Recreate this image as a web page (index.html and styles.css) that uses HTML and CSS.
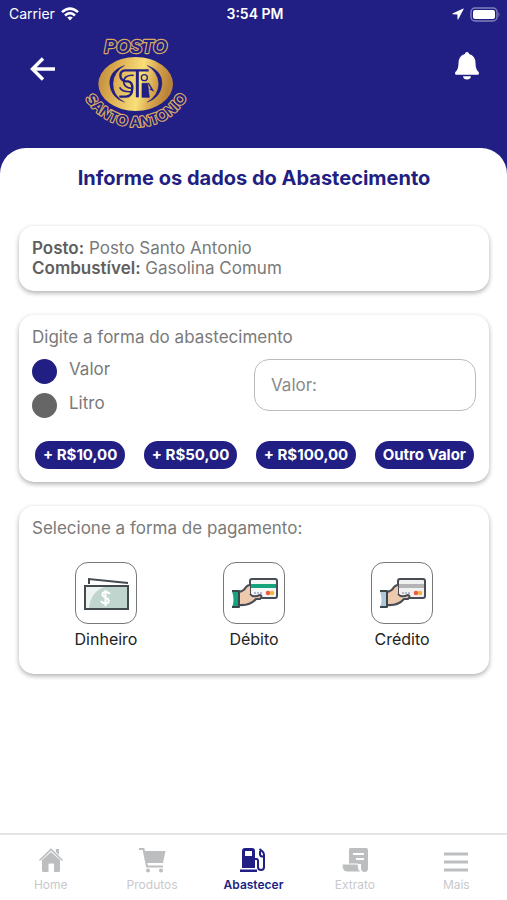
FILE: index.html
```html
<!DOCTYPE html>
<html lang="pt-BR">
  <head>
    <meta charset="UTF-8" />
    <meta name="viewport" content="width=device-width, initial-scale=1" />
    <title>Abastecer</title>
    <link rel="stylesheet" href="styles.css">
  </head>
  <body>
    <header class="header">
      <div class="status-bar">
        <div class="carrier">
          <span>Carrier</span>
          <svg width="18" height="14" viewBox="0 0 18 14" fill="none" stroke="#fff" stroke-width="2.6">
            <path d="M1 5.1Q9-2 17 5.1" />
            <path d="M4 8.4Q9 4 14 8.4" />
            <path d="M6.2 10.6Q9 8.2 11.8 10.6L9 13.6z" fill="#fff" stroke="none" />
          </svg>
        </div>
        <span class="time">3:54 PM</span>
        <div class="status-icons">
          <svg width="12" height="12" viewBox="0 0 12 12" fill="#fff">
            <path d="M11.3.5.5 5.6q-.5.5.2.7l4.7.1.1 4.8q.3.7.8.1L11.7 1q.1-.6-.4-.5z" />
          </svg>
          <svg width="31" height="15" viewBox="0 0 31 15">
            <rect x="1" y="1" width="26" height="13" rx="4" fill="none" stroke="#8180bd" stroke-width="1.4" />
            <rect x="3" y="3" width="22" height="9" rx="2" fill="#fff" />
            <path d="M28.5 5q2 2.5 0 5z" fill="#8180bd" />
          </svg>
        </div>
      </div>
      <div class="top-bar">
        <button class="icon-button" type="button" aria-label="Voltar">
          <svg width="26" height="24" viewBox="0 0 26 24" fill="none" stroke="#fff" stroke-width="3.4">
            <path d="M13 1.5 2.5 12 13 22.5M2.5 12H25" />
          </svg>
        </button>
        <svg class="logo" width="120" height="100" viewBox="228 108 360 300" role="img" aria-label="Posto Santo Antonio">
          <defs>
            <linearGradient id="gold" x1="0" y1="0" x2="1" y2="0.15">
              <stop offset="0" stop-color="#b9883b" />
              <stop offset="0.25" stop-color="#dba94f" />
              <stop offset="0.62" stop-color="#f8df79" />
              <stop offset="0.82" stop-color="#d5a24c" />
              <stop offset="1" stop-color="#b98439" />
            </linearGradient>
            <path id="arc" d="M246 284C290 350 340 380 407 380C474 380 530 350 570 280" />
          </defs>
          <text class="logo-top" x="407" y="160" text-anchor="middle">POSTO</text>
          <ellipse cx="407" cy="252" rx="112" ry="81" fill="url(#gold)" />
          <g fill="none" stroke="#211f83">
            <path d="M374 196Q327 213 329 251Q332 292 374 307Q338 286 339 251Q340 217 374 196z" fill="#211f83" stroke-width="1" />
            <path d="M441 196Q487 213 486 251Q483 292 441 307Q476 286 476 251Q475 217 441 196z" fill="#211f83" stroke-width="1" />
            <path d="M446 211H376Q361 212 361 226Q361 241 377 244H385Q398 247 397 266Q396 289 378 290H358" stroke-width="7" />
            <path d="M401 226Q372 224 371 246Q372 263 395 265M359 262Q366 277 397 275" stroke-width="5" />
            <path d="M412 212V292" stroke-width="9" />
            <circle cx="433" cy="233" r="9" stroke-width="4" />
            <path d="M426 250H443L448 292H426z" fill="#211f83" stroke-width="2" />
            <path d="M445 249 458 271 449 267" stroke-width="4" />
          </g>
          <text class="logo-bottom" text-anchor="middle"><textPath href="#arc" startOffset="50%">SANTO ANTONIO</textPath></text>
        </svg>
        <button class="icon-button bell" type="button" aria-label="Notificações">
          <svg width="24" height="28" viewBox="0 0 24 28" fill="#fff">
            <path d="M12 0q1.8 0 2.2 1.9 6.3 1.8 6.3 9.1 0 6.5 3.2 9 .8 2.8-1 2.8H1.3q-1.800 0-1-2.800 3.200-2.500 3.200-9 0-7.300 6.300-9.100Q10.200 0 12 0zM8 24.300h8Q15.500 27.500 12 27.500T8 24.300z" />
          </svg>
        </button>
      </div>
    </header>

    <main class="sheet">
      <h1>Informe os dados do Abastecimento</h1>

      <section class="card">
        <p><strong>Posto:</strong> Posto Santo Antonio</p>
        <p><strong>Combustível:</strong> Gasolina Comum</p>
      </section>

      <section class="card">
        <h2>Digite a forma do abastecimento</h2>
        <div class="amount">
          <div class="modes">
            <label class="mode"><input type="radio" name="modo" checked /><span>Valor</span></label>
            <label class="mode"><input type="radio" name="modo" /><span>Litro</span></label>
          </div>
          <input class="amount-input" type="text" placeholder="Valor:" aria-label="Valor" />
        </div>
        <div class="quick-values">
          <button type="button">+ R$10,00</button>
          <button type="button">+ R$50,00</button>
          <button type="button">+ R$100,00</button>
          <button type="button">Outro Valor</button>
        </div>
      </section>

      <section class="card">
        <h2>Selecione a forma de pagamento:</h2>
        <div class="payments">
          <button class="payment" type="button">
            <span class="payment-icon">
              <svg width="46" height="34" viewBox="0 0 46 34">
                <path d="M6 8V3L45 7" fill="none" stroke="#434a4e" stroke-width="2" />
                <rect x="2" y="10" width="43" height="23" fill="#c0d5ce" />
                <path d="M2 10H24Q7 15 6 33H2z" fill="#edf3f1" />
                <rect x="2" y="10" width="43" height="23" fill="none" stroke="#434a4e" stroke-width="2" />
                <path d="M27 18Q25 15.5 22 16Q18 17 20 20L25 23Q27 27 23 27.5Q19.5 27.5 18 25M22.5 14V30" fill="none" stroke="#fff" stroke-width="2" />
              </svg>
            </span>
            Dinheiro
          </button>
          <button class="payment" type="button">
            <span class="payment-icon">
              <svg width="48" height="34" viewBox="0 0 48 34" stroke-linejoin="round">
                <rect x="20" y="3" width="27" height="19" rx="2" fill="#f6f7f7" stroke="#474c55" stroke-width="2" />
                <path d="M21 8H46V12H21z" fill="#16a47d" />
                <path d="M24 17h9" stroke="#9ca6bb" stroke-width="1.5" stroke-dasharray="2 1" />
                <circle cx="38" cy="17" r="2.3" fill="#ef5945" />
                <circle cx="42" cy="17" r="2.3" fill="#f7b443" />
                <path d="M9 16 14 14 17 10 20 9V18Q24 21 30 19Q33 20 29 23H26Q21 30 9 29z" fill="#edc9ad" />
                <path d="M9 16Q14 15 16 11Q18 9 20 9M20 18Q23 22 30 19Q33 20 30 23H26Q20 30 9 29" fill="none" stroke="#474c55" stroke-width="2" />
                <path d="M2 15H9V31H2Q5 25 2 15z" fill="#16a47d" />
                <path d="M2 15H9V31H2" fill="none" stroke="#39474b" stroke-width="2" />
              </svg>
            </span>
            Débito
          </button>
          <button class="payment" type="button">
            <span class="payment-icon">
              <svg width="48" height="34" viewBox="0 0 48 34" stroke-linejoin="round">
                <rect x="20" y="3" width="27" height="19" rx="2" fill="#f0f0f1" stroke="#474c55" stroke-width="2" />
                <path d="M21 8H46V12H21z" fill="#b4b4b7" />
                <path d="M24 17h9" stroke="#9ca6bb" stroke-width="1.5" stroke-dasharray="2 1" />
                <circle cx="38" cy="17" r="2.3" fill="#ef5945" />
                <circle cx="42" cy="17" r="2.3" fill="#f7b443" />
                <path d="M9 16 14 14 17 10 20 9V18Q24 21 30 19Q33 20 29 23H26Q21 30 9 29z" fill="#edc9ad" />
                <path d="M9 16Q14 15 16 11Q18 9 20 9M20 18Q23 22 30 19Q33 20 30 23H26Q20 30 9 29" fill="none" stroke="#474c55" stroke-width="2" />
                <path d="M2 15H9V31H2Q5 25 2 15z" fill="#afc8d9" />
                <path d="M2 15H9V31H2" fill="none" stroke="#39474b" stroke-width="2" />
              </svg>
            </span>
            Crédito
          </button>
        </div>
      </section>
    </main>

    <nav class="tab-bar">
      <a class="tab" href="#home">
        <svg width="26" height="26" viewBox="0 0 26 26" fill="#bcbec0">
          <path d="M13 5 22 13V23.5Q22 25 20.5 25H16V17.5Q16 16.5 15 16.5H11.5Q10.5 16.5 10.5 17.5V25H5.5Q4 25 4 23.5V13z" />
          <path d="M1.5 13.5 13 2.5 24.5 13.5" fill="none" stroke="#bcbec0" stroke-width="1.7" />
          <path d="M18 2H21V8L18 5z" />
        </svg>
        Home
      </a>
      <a class="tab" href="#produtos">
        <svg width="28" height="26" viewBox="0 0 28 26" fill="#bcbec0">
          <path d="M1 2H5.5L9 19.5H25" fill="none" stroke="#bcbec0" stroke-width="2" />
          <path d="M6 4H27.5L25 16H8.5z" />
          <circle cx="10" cy="23.5" r="2" />
          <circle cx="23" cy="23.5" r="2" />
        </svg>
        Produtos
      </a>
      <a class="tab active" href="#abastecer">
        <svg width="26" height="26" viewBox="0 0 26 26" fill="#211f83">
          <path fill-rule="evenodd" d="M2 21V4Q2 1 5 1H12Q15 1 15 4V21zM5 4V9H12V4z" />
          <path d="M0 22.5H17V25H0z" />
          <path d="M15 12H16.5Q18 12 18 14V20Q18 23 21 23Q24 23 24 20V8Q24 6 22.5 4.5L19.5 2M20 4V7.5Q20.5 10 24 9.5" fill="none" stroke="#211f83" stroke-width="2" />
        </svg>
        Abastecer
      </a>
      <a class="tab" href="#extrato">
        <svg width="26" height="26" viewBox="0 0 26 26">
          <path d="M8 1H24Q26 1 26 3V21Q26 25 22.5 25Q19 25 19 21V17H7V2z" fill="#bcbec0" />
          <path d="M0 17H16Q16 23 19 25H5Q0 25 0 17z" fill="#bcbec0" stroke="#fff" stroke-width="1" />
          <path d="M11 7H22M14 12H22" stroke="#fff" stroke-width="2" />
        </svg>
        Extrato
      </a>
      <a class="tab" href="#mais">
        <svg width="26" height="26" viewBox="0 0 26 26" stroke="#bcbec0" stroke-width="3">
          <path d="M1 7H25M1 15H25M1 23H25" />
        </svg>
        Mais
      </a>
    </nav>
  </body>
</html>
```
FILE: styles.css
```css
* {
  box-sizing: border-box;
}
body {
  margin: 0;
  min-height: 100vh;
  display: flex;
  flex-direction: column;
  background: #211f83;
  font-family: Inter, "Open Sans", sans-serif;
  font-size: 17px;
  line-height: 20px;
  color: #7a7a7a;
}
h1,
h2,
p {
  margin: 0;
}
button {
  font: inherit;
  border: none;
  padding: 0;
  cursor: pointer;
}
svg {
  display: block;
}

/* Header */
.header {
  color: #fff;
}
.status-bar {
  display: grid;
  grid-template-columns: 1fr auto 1fr;
  align-items: center;
  height: 28px;
  padding: 0 6px 0 9px;
  font-size: 14px;
}
.carrier,
.status-icons {
  display: flex;
  align-items: center;
  gap: 6px;
}
.status-icons {
  justify-content: flex-end;
}
.time {
  font-weight: 600;
}
.top-bar {
  display: flex;
  align-items: flex-start;
  height: 120px;
  padding: 8px 28px 0 30px;
}
.icon-button {
  display: flex;
  align-items: center;
  height: 66px;
  background: none;
}
.bell {
  margin-left: auto;
  height: 60px;
}
.logo {
  margin-left: 20px;
  overflow: visible;
}
.logo text {
  font-family: "Liberation Sans", sans-serif;
  font-weight: bold;
  fill: #211f83;
  stroke: #d9a965;
  stroke-width: 7px;
  stroke-linejoin: round;
  paint-order: stroke;
}
.logo .logo-top {
  font-size: 54px;
  font-style: italic;
}
.logo .logo-bottom {
  font-size: 44px;
}

/* Content */
.sheet {
  flex: 1;
  display: flex;
  flex-direction: column;
  gap: 24px;
  padding: 18px 18px 24px 19px;
  background: #fff;
  border-radius: 26px 26px 0 0;
}
h1 {
  margin-bottom: 12px;
  font-size: 20px;
  line-height: 24px;
  text-align: center;
  color: #211f83;
}
h2 {
  font-size: 17px;
  font-weight: 400;
}
.card {
  padding: 12px 13px 13px;
  border-radius: 15px;
  background: #fff;
  box-shadow: 0 2px 5px rgba(0, 0, 0, 0.32);
}
.card strong {
  font-weight: 600;
  color: #606060;
}
.amount {
  display: flex;
  justify-content: space-between;
  gap: 16px;
  margin-top: 12px;
}
.modes {
  display: flex;
  flex-direction: column;
  gap: 9px;
}
.mode {
  display: flex;
  gap: 12px;
}
.mode input {
  appearance: none;
  width: 25px;
  height: 25px;
  margin: 0;
  border-radius: 50%;
  background: #666;
}
.mode input:checked {
  background: #211f83;
}
.amount-input {
  width: 50%;
  height: 52px;
  padding: 0 16px;
  border: 1px solid #bbb;
  border-radius: 15px;
  font: inherit;
  color: #7a7a7a;
}
.amount-input::placeholder {
  color: #8a8a8a;
}
.quick-values {
  display: flex;
  flex-wrap: wrap;
  justify-content: space-between;
  gap: 8px;
  margin-top: 23px;
  padding: 0 2px 0 3px;
}
.quick-values button {
  height: 28px;
  padding: 0 8px;
  border-radius: 14px;
  background: #211f83;
  color: #fff;
  font-size: 15px;
  font-weight: 700;
}
.payments {
  display: grid;
  grid-template-columns: repeat(3, 1fr);
  margin: 24px 0 12px;
}
.payment {
  display: flex;
  flex-direction: column;
  align-items: center;
  gap: 5px;
  background: none;
  color: #222;
  font-size: 16px;
}
.payment-icon {
  display: flex;
  align-items: center;
  justify-content: center;
  width: 62px;
  height: 62px;
  border: 1px solid #777;
  border-radius: 13px;
}

/* Bottom navigation */
.tab-bar {
  display: grid;
  grid-template-columns: repeat(5, 1fr);
  height: 67px;
  padding-top: 12px;
  border-top: 2px solid #e4e4e4;
  background: #fff;
}
.tab {
  display: flex;
  flex-direction: column;
  align-items: center;
  gap: 4px;
  font-size: 12px;
  line-height: 16px;
  color: #c8c9cb;
  text-decoration: none;
}
.tab.active {
  color: #211f83;
  font-weight: 600;
}
```
